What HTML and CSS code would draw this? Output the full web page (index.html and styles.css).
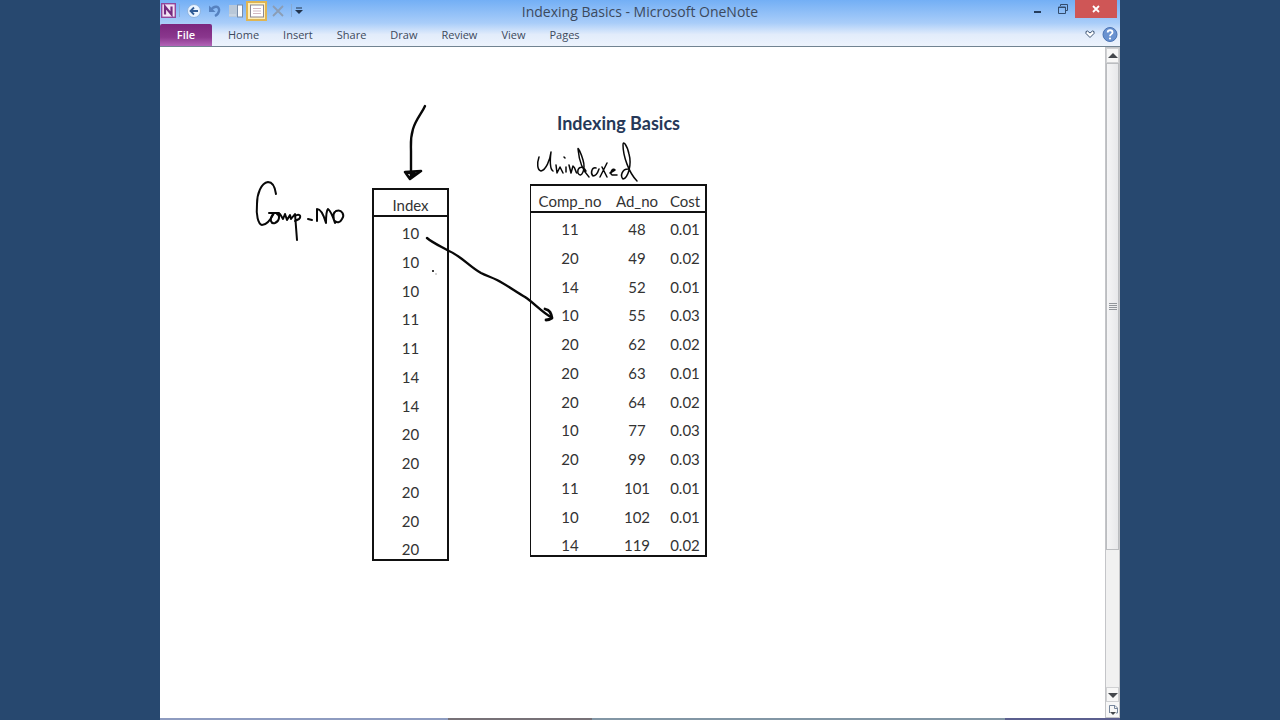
FILE: index.html
```html
<!DOCTYPE html>
<html lang="en">
<head>
<meta charset="utf-8">
<title>Indexing Basics - Microsoft OneNote</title>
<link rel="stylesheet" href="styles.css">
</head>
<body>
<div class="app">
  <header class="chrome">
    <div class="titlebar">
      <div class="quick">
        <svg class="logo" viewBox="0 0 15 15" aria-hidden="true"><rect x=".7" y=".7" width="13.6" height="13.6" fill="#f3e3f5" stroke="#93479b" stroke-width="1.4"/><path d="M4 11.5V3.5L10.500 11.500V3.500" fill="none" stroke="#752a80" stroke-width="2.200"/></svg>
        <span class="divider"></span>
        <button class="tool" aria-label="Back"><svg viewBox="0 0 16 16"><circle cx="8" cy="8" r="6.500" fill="#eaf4ff" stroke="#8eb3df"/><path d="M12 8H5M8 4.500L4.500 8 8 11.500" fill="none" stroke="#315c95" stroke-width="1.800"/></svg></button>
        <button class="tool" aria-label="Undo"><svg viewBox="0 0 16 16"><path d="M4 7C7 2 13 3 12 8 11.500 10.500 10 12 8 13" fill="none" stroke="#5682c0" stroke-width="2.400"/><path d="M2 2.500V9H8.500Z" fill="#5682c0"/></svg></button>
        <button class="tool" aria-label="Dock to desktop"><svg viewBox="0 0 16 16"><rect x="1" y="2" width="8" height="12" fill="#b9c8d8"/><path d="M1 12H8" stroke="#d6e0eb"/><rect x="9.500" y="2" width="5" height="12" fill="#f8fbfe" stroke="#778ca8"/></svg></button>
        <button class="tool active" aria-label="Full page view"><svg viewBox="0 0 16 16"><rect x="1.500" y="2" width="13" height="12" fill="#fff" stroke="#8c8793"/><path d="M4 5.500H12M4 8H12M4 10.500H12" stroke="#d3b9c2"/></svg></button>
        <button class="tool" aria-label="Delete"><svg viewBox="0 0 16 16"><path d="M3 3L13 13M13 3L3 13" stroke="#8b9db5" stroke-width="1.800"/></svg></button>
        <span class="divider"></span>
        <button class="more" aria-label="Customize toolbar"><svg viewBox="0 0 8 8"><path d="M1 1H7" stroke="#22344d"/><path d="M0 3H8L4 7Z" fill="#22344d"/></svg></button>
      </div>
      <div class="caption">Indexing Basics - Microsoft OneNote</div>
      <div class="controls">
        <button class="win" aria-label="Minimize"><svg viewBox="0 0 12 12"><path d="M2 9H9" stroke="#253d5c" stroke-width="2"/></svg></button>
        <button class="win" aria-label="Restore"><svg viewBox="0 0 12 12"><path d="M3.500 3V1.500H10.500V7.500H9M1.500 4H8.500V10.500H1.500ZM1 4.500H9" fill="none" stroke="#334c6d"/></svg></button>
        <button class="win close" aria-label="Close"><svg viewBox="0 0 12 12"><path d="M3 3L9 9M9 3L3 9" stroke="#fff" stroke-width="1.800"/></svg></button>
      </div>
    </div>
    <nav class="ribbon">
      <button class="file">File</button>
      <div class="tabs">
        <button class="tab">Home</button><button class="tab">Insert</button><button class="tab">Share</button><button class="tab">Draw</button><button class="tab">Review</button><button class="tab">View</button><button class="tab">Pages</button>
      </div>
      <button class="help" aria-label="Expand ribbon"><svg viewBox="0 0 16 16"><path d="M4 4.500L5.500 4 8 6 10.500 4 12 4.500V6.500L8 10.500 4 6.500Z" fill="#fff" stroke="#3b5271"/></svg></button>
      <button class="help" aria-label="Help"><svg viewBox="0 0 16 16"><circle cx="8" cy="7.500" r="7" fill="#6a92d0" stroke="#4a74b4"/><path d="M5.700 5.500C5.700 2.500 10.500 2.500 10.500 5.500 10.500 7.100 8 7.200 8 9.200" fill="none" stroke="#fff" stroke-width="1.800"/><circle cx="8" cy="11.500" r="1.100" fill="#fff"/></svg></button>
    </nav>
  </header>
  <main class="work">
    <div class="canvas">
      <table class="grid index">
        <thead><tr><th>Index</th></tr></thead>
        <tbody>
          <tr><td>10</td></tr><tr><td>10</td></tr><tr><td>10</td></tr><tr><td>11</td></tr><tr><td>11</td></tr><tr><td>14</td></tr><tr><td>14</td></tr><tr><td>20</td></tr><tr><td>20</td></tr><tr><td>20</td></tr><tr><td>20</td></tr><tr><td>20</td></tr>
        </tbody>
      </table>
      <section class="data">
        <h1 class="heading">Indexing Basics</h1>
        <table class="grid records">
          <thead><tr><th class="comp">Comp_no</th><th class="ad">Ad_no</th><th class="cost">Cost</th></tr></thead>
          <tbody>
            <tr><td>11</td><td>48</td><td>0.01</td></tr>
            <tr><td>20</td><td>49</td><td>0.02</td></tr>
            <tr><td>14</td><td>52</td><td>0.01</td></tr>
            <tr><td>10</td><td>55</td><td>0.03</td></tr>
            <tr><td>20</td><td>62</td><td>0.02</td></tr>
            <tr><td>20</td><td>63</td><td>0.01</td></tr>
            <tr><td>20</td><td>64</td><td>0.02</td></tr>
            <tr><td>10</td><td>77</td><td>0.03</td></tr>
            <tr><td>20</td><td>99</td><td>0.03</td></tr>
            <tr><td>11</td><td>101</td><td>0.01</td></tr>
            <tr><td>10</td><td>102</td><td>0.01</td></tr>
            <tr><td>14</td><td>119</td><td>0.02</td></tr>
          </tbody>
        </table>
      </section>
      <svg class="ink" viewBox="160 47 600 540" role="img" aria-label="Handwritten notes: Comp-no, Unindexed, and arrows">
        <g class="stroke">
          <path d="M425 106C422 113 416 119 413 129C410 139 411 144 411 151V176"/>
          <path d="M405 172L421 171L410 179L405 172L415 174L410 177" stroke-width="2.600"/>
          <path d="M427 238C433 243 440 246 449 251C461 256 470 267 481 273C487 276 491 277 497 280C507 285 516 292 525 297C534 303 543 313 551 317"/>
          <path d="M545 309C550 310 551 313 552 318C549 320 548 320 546 320" stroke-width="2.800"/>
        </g>
        <g class="stroke medium">
          <path d="M276 194C275 187 273 182 268 182C261 183 257 194 257 204C256 215 258 224 262 225C267 225 271 219 274 213"/>
          <path d="M269 213H279M273 214C269 220 271 224 275 223C280 221 280 215 277 214M280 214L283 219L285 214L287 220L290 215L291 219L295 214L297 240M295 216C299 213 302 216 299 219L295 221"/>
          <path d="M308 219L312 220M317 221V209C321 209 324 216 326 223C326 216 326 211 328 209C331 211 333 217 335 223C333 218 333 213 335 212M336 211C342 209 345 215 342 219C340 223 337 223 335 221"/>
        </g>
        <g class="stroke fine">
          <path d="M539 157C537 163 537 170 541 171C546 170 550 160 551 152C550 160 550 169 553 171"/>
          <path d="M556 165L557 173L560 167L563 173M566 167V172M564 157L565 158M569 165L571 173L573 166C576 168 575 172 577 173"/>
          <path d="M586 171C582 164 577 168 578 173C581 179 586 170 583 160C581 153 578 147 578 149C579 160 583 171 589 177"/>
          <path d="M596 168C592 167 590 173 593 176C596 176 598 172 599 169M602 167L607 177M607 163L600 177M610 173L615 170C613 167 609 173 612 175L617 175"/>
          <path d="M628 169C622 169 620 176 623 179C628 178 632 165 629 154C627 145 623 140 623 145C623 156 629 173 637 181"/>
        </g>
        <circle cx="433" cy="271" r="1"/><circle cx="436" cy="274" r=".7" fill="#888"/>
      </svg>
    </div>
    <div class="scroll">
      <button class="arrow" aria-label="Scroll up"><svg viewBox="0 0 10 10"><path d="M0 7L5 2L10 7Z"/></svg></button>
      <div class="track"><div class="thumb"><svg viewBox="0 0 8 8"><path d="M0 1.500H8M0 3.500H8M0 5.500H8M0 7.500H8" stroke="#92969b"/></svg></div></div>
      <button class="arrow" aria-label="Scroll down"><svg viewBox="0 0 10 10"><path d="M0 3L5 8L10 3Z"/></svg></button>
      <button class="arrow page" aria-label="New page"><svg viewBox="0 0 12 14"><path d="M2.500 10V2.500H8L10.500 5V10H9M7.500 2.500V5.500H10" fill="none" stroke="#77869c"/><path d="M3 9H9L6 12Z"/></svg></button>
    </div>
  </main>
  <footer class="edge"><span class="a"></span><span class="b"></span><span class="c"></span><span class="d"></span></footer>
</div>
</body>
</html>
```
FILE: styles.css
```css
* { box-sizing: border-box; }
body { margin: 0; background: #27486f; font-family: "Open Sans", "Noto Sans", sans-serif; }
button { border: 0; padding: 0; background: none; font: inherit; color: inherit; display: flex; align-items: center; justify-content: center; }
svg { display: block; }
.app { width: 75%; min-height: 100vh; margin: 0 auto; display: flex; flex-direction: column; background: #fff; }
.chrome { background: linear-gradient(#73aff5, #a9cdf9 50%, #e2ecfb 75%, #edf3fc); border-bottom: 1px solid #718391; color: #3c495c; }
.titlebar { display: grid; grid-template-columns: 1fr auto 1fr; height: 23px; }
.quick { display: flex; align-items: center; height: 21px; padding-left: 1px; }
.logo { width: 15px; height: 15px; }
.divider { width: 1px; height: 13px; margin: 0 3px; background: #87aad4; }
.tool { width: 21px; height: 20px; }
.tool svg { width: 16px; height: 16px; }
.active { border: 2px solid #dfb553; background: #ffefb8; }
.more svg { width: 8px; height: 8px; }
.caption { font-size: 14px; line-height: 24px; }
.controls { display: flex; justify-content: flex-end; padding-right: 3px; }
.win { width: 25px; height: 18px; }
.win svg { width: 12px; height: 12px; }
.close { width: 42px; background: #cf5656; }
.ribbon { display: flex; align-items: center; height: 23px; font-size: 11px; }
.file { width: 52px; height: 22px; background: linear-gradient(#7b277e, #8a378d 60%, #b264b7); color: #fff; font-weight: 600; border-radius: 2px 2px 0 0; }
.tabs { display: flex; flex: 1; gap: 24px; padding-left: 16px; }
.help { width: 20px; }
.help svg { width: 16px; height: 16px; }
.work { flex: 1; display: flex; }
.canvas { position: relative; flex: 1; display: flex; align-items: flex-start; gap: 81px; padding: 64px 0 0 212px; }
.grid { border-collapse: separate; border-spacing: 0; font-family: Lato, sans-serif; font-size: 15px; line-height: 18px; color: #333; text-align: center; }
.grid th, .grid td { padding: 0; font-weight: 400; }
.grid th { height: 27px; padding-top: 5px; border-bottom: 2px solid #111; }
.grid td { height: 29px; padding-top: 2px; }
.grid tr:nth-child(4n) td { height: 28px; }
.grid tbody tr:last-child td { height: 25px; padding-top: 4px; }
.index { width: 77px; margin-top: 77px; border: 2px solid #111; }
.data { width: 177px; }
.heading { margin: 0; font: 700 18px/24px Lato, sans-serif; color: #263858; text-align: center; white-space: nowrap; }
.records { width: 100%; margin-top: 49px; border: 2px solid #111; border-left-width: 1px; table-layout: fixed; }
.comp { width: 78px; }
.ad { width: 56px; }
.ink { position: absolute; left: 0; top: 0; width: 600px; height: 540px; }
.stroke { fill: none; stroke: #080808; stroke-width: 2.4px; stroke-linecap: round; stroke-linejoin: round; }
.medium { stroke-width: 2px; }
.fine { stroke-width: 1.5px; }
.scroll { width: 15px; display: flex; flex-direction: column; background: #f0f0f1; border: 1px solid #c4c5c8; }
.arrow { height: 15px; border: 1px solid #d0d1d3; background: #f7f7f7; fill: #45484d; }
.arrow svg { width: 10px; height: 10px; }
.page { border: 0; }
.page svg { width: 12px; height: 14px; }
.track { flex: 1; background: #f1f1f1; }
.thumb { height: 78%; display: flex; align-items: center; justify-content: center; border: 1px solid #bbbdc0; background: linear-gradient(90deg, #f5f5f6, #e7e8ea); }
.thumb svg { width: 8px; height: 8px; }
.edge { display: grid; grid-template-columns: 30% 15% 43% 12%; height: 2px; }
.a { background: #8e9cc0; }
.b { background: #777177; }
.c { background: #8296a5; }
.d { background: #5b5f8f; }
```
